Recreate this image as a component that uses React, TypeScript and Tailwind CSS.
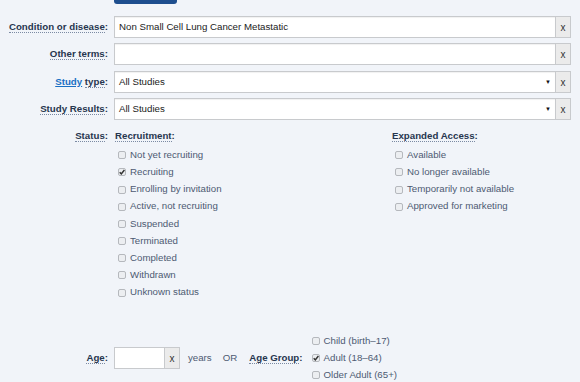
import React from "react";

const font = { fontFamily: '"Liberation Sans", Arial, sans-serif' };

function Box({ checked }: { checked?: boolean }) {
  return (
    <span className="relative inline-block w-[8px] h-[8px] rounded-[2px] border border-[#b5b8bd] bg-[#eceef1] shrink-0">
      {checked && (
        <svg viewBox="0 0 8 8" className="absolute -left-[1px] -top-[1px] w-[8px] h-[8px]">
          <path d="M1.7 4.2 L3.3 5.9 L6.4 2" fill="none" stroke="#333" strokeWidth="1.5" />
        </svg>
      )}
    </span>
  );
}

function Check({ label, checked }: { label: string; checked?: boolean }) {
  return (
    <div className="flex items-center h-[17.2px] gap-[4px] text-[9.7px] text-[#4d5a72] whitespace-nowrap">
      <Box checked={checked} />
      <span>{label}</span>
    </div>
  );
}

function Label({ children }: { children: React.ReactNode }) {
  return <span className="border-b border-dotted border-[#7b8aa3] leading-[12px]">{children}</span>;
}

function XBtn() {
  return (
    <div className="w-[16px] h-[22px] border border-[#c8cacd] bg-[#ebebeb] flex items-center justify-center text-[10px] text-[#333] -ml-[1px] shrink-0">
      x
    </div>
  );
}

function Row({ label, value, select, mt }: { label: React.ReactNode; value?: string; select?: boolean; mt: string }) {
  return (
    <div className={`flex items-center ${mt}`}>
      <div className="w-[108px] shrink-0 text-right text-[9.7px] font-bold text-[#27364f] whitespace-nowrap">{label}</div>
      <div className="ml-[6px] flex-1 h-[22px] bg-white border border-[#c8cacd] shadow-[inset_0_1px_1px_rgba(0,0,0,0.06)] flex items-center px-[4px] text-[9.7px] text-[#222]">
        <span className="flex-1">{value}</span>
        {select && <span className="text-[6px] text-[#111] mr-[0px]">▼</span>}
      </div>
      <XBtn />
    </div>
  );
}

export default function App() {
  return (
    <div className="w-[580px] h-[382px] bg-[#f1f4f9] overflow-hidden relative pr-[9px]" style={font}>
      <div className="ml-[114px] w-[63px] h-[4px] bg-[#1e4e8e] rounded-b-[3px]" />
      <Row mt="mt-[12px]" label={<><Label>Condition or disease</Label>:</>} value="Non Small Cell Lung Cancer Metastatic" />
      <Row mt="mt-[5px]" label={<><Label>Other terms</Label>:</>} />
      <Row mt="mt-[6px]" select label={<><span className="text-[#1a6fc4] underline">Study</span> <Label>type</Label>:</>} value="All Studies" />
      <Row mt="mt-[5px]" select label={<><Label>Study Results</Label>:</>} value="All Studies" />

      <div className="flex mt-[9px]">
        <div className="w-[108px] shrink-0 text-right text-[9.7px] font-bold text-[#27364f]">
          <Label>Status</Label>:
        </div>
        <div className="ml-[7px] w-[277px] shrink-0">
          <div className="text-[9.7px] font-bold text-[#27364f]">
            <Label>Recruitment</Label>:
          </div>
          <div className="ml-[3px] mt-[3px]">
            <Check label="Not yet recruiting" />
            <Check label="Recruiting" checked />
            <Check label="Enrolling by invitation" />
            <Check label="Active, not recruiting" />
            <Check label="Suspended" />
            <Check label="Terminated" />
            <Check label="Completed" />
            <Check label="Withdrawn" />
            <Check label="Unknown status" />
          </div>
        </div>
        <div>
          <div className="text-[9.7px] font-bold text-[#27364f]">
            <Label>Expanded Access</Label>:
          </div>
          <div className="ml-[3px] mt-[3px]">
            <Check label="Available" />
            <Check label="No longer available" />
            <Check label="Temporarily not available" />
            <Check label="Approved for marketing" />
          </div>
        </div>
      </div>

      <div className="flex items-center mt-[31px]">
        <div className="w-[108px] shrink-0 text-right text-[9.7px] font-bold text-[#27364f]">
          <Label>Age</Label>:
        </div>
        <div className="ml-[6px] w-[51px] h-[22px] bg-white border border-[#c8cacd]" />
        <XBtn />
        <span className="ml-[8px] text-[9.7px] text-[#4d5a72]">years</span>
        <span className="ml-[11px] text-[9.7px] text-[#4d5a72]">OR</span>
        <span className="ml-[12px] text-[9.7px] font-bold text-[#27364f]">
          <Label>Age Group</Label>:
        </span>
        <div className="ml-[9px]">
          <Check label="Child (birth–17)" />
          <Check label="Adult (18–64)" checked />
          <Check label="Older Adult (65+)" />
        </div>
      </div>
    </div>
  );
}
